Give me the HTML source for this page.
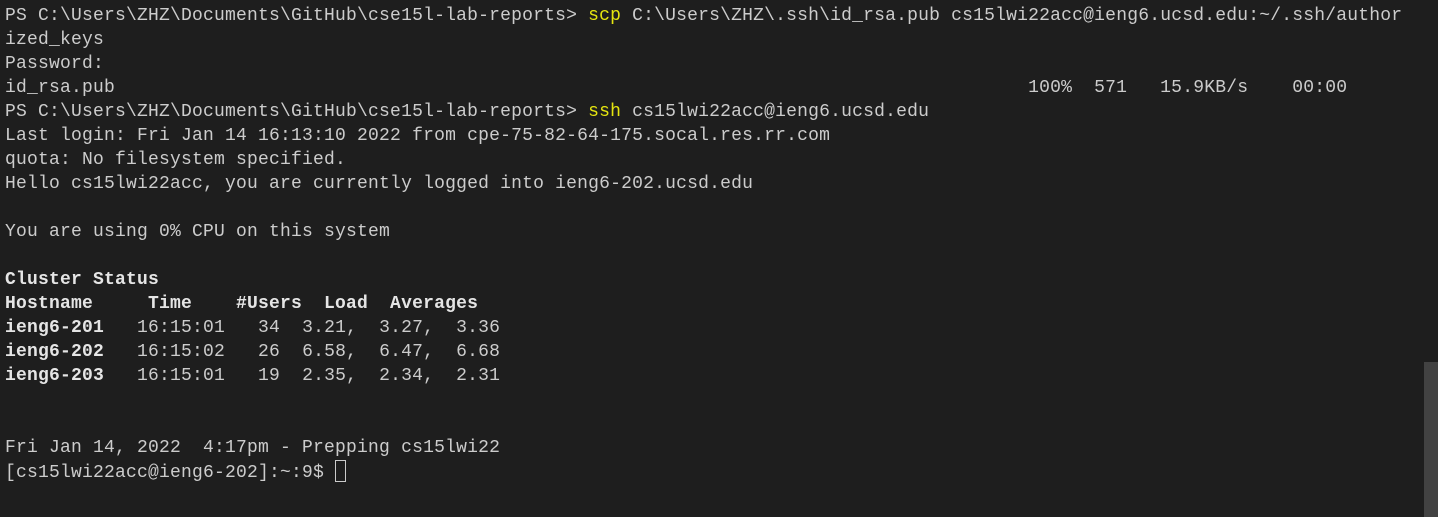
<!DOCTYPE html>
<html><head><meta charset="utf-8"><style>
html,body{margin:0;padding:0;background:#1e1e1e;width:1438px;height:517px;overflow:hidden}
pre{margin:0;position:absolute;left:5px;top:4px;font-family:"Liberation Mono",monospace;font-size:18px;line-height:24px;color:#cccccc;letter-spacing:0.2px}
.y{color:#e5e510}
b{font-weight:bold;color:#e5e5e5}
.cur{display:inline-block;width:11px;height:22px;border:1px solid #cccccc;vertical-align:-5px;box-sizing:border-box}
.sb{position:absolute;left:1424px;top:362px;width:14px;height:155px;background:#424242}
</style></head><body>
<pre>PS C:\Users\ZHZ\Documents\GitHub\cse15l-lab-reports&gt; <span class="y">scp</span> C:\Users\ZHZ\.ssh\id_rsa.pub cs15lwi22acc@ieng6.ucsd.edu:~/.ssh/author
ized_keys
Password:
id_rsa.pub                                                                                   100%  571   15.9KB/s    00:00
PS C:\Users\ZHZ\Documents\GitHub\cse15l-lab-reports&gt; <span class="y">ssh</span> cs15lwi22acc@ieng6.ucsd.edu
Last login: Fri Jan 14 16:13:10 2022 from cpe-75-82-64-175.socal.res.rr.com
quota: No filesystem specified.
Hello cs15lwi22acc, you are currently logged into ieng6-202.ucsd.edu

You are using 0% CPU on this system

<b>Cluster Status</b>
<b>Hostname     Time    #Users  Load  Averages</b>
<b>ieng6-201</b>   16:15:01   34  3.21,  3.27,  3.36
<b>ieng6-202</b>   16:15:02   26  6.58,  6.47,  6.68
<b>ieng6-203</b>   16:15:01   19  2.35,  2.34,  2.31


Fri Jan 14, 2022  4:17pm - Prepping cs15lwi22
[cs15lwi22acc@ieng6-202]:~:9$ <span class="cur"></span></pre>
<div class="sb"></div>
</body></html>
